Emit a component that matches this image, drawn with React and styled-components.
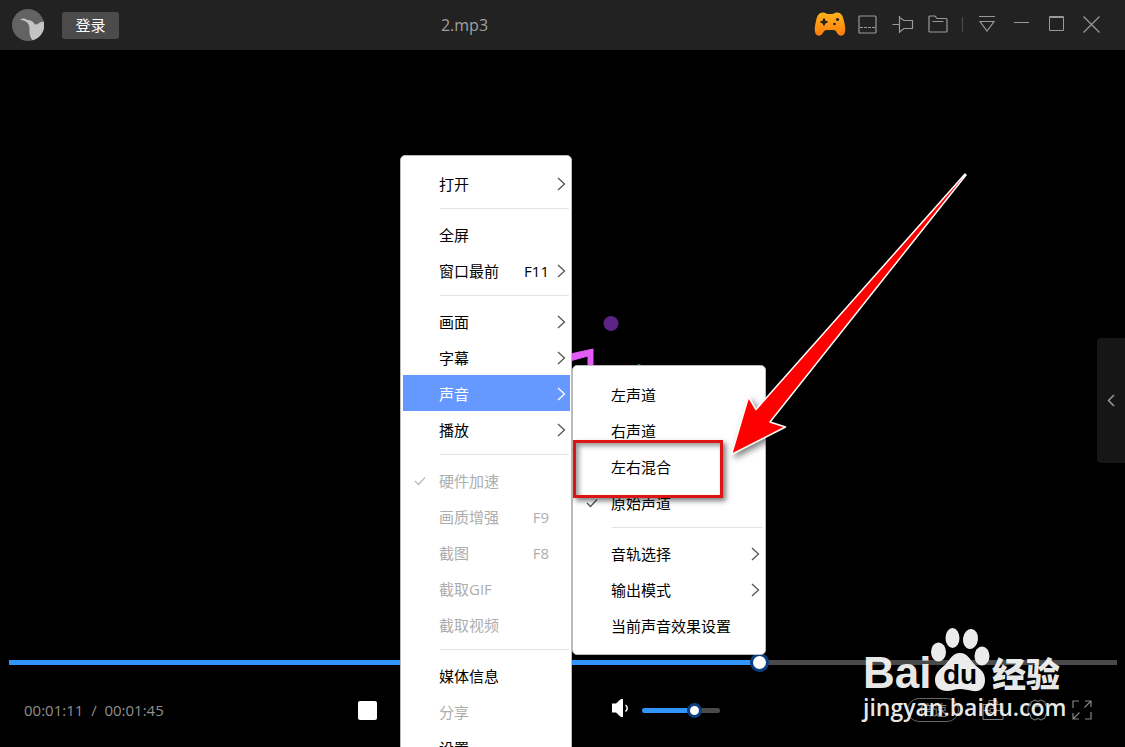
import React, { useState } from "react";
import styled, { createGlobalStyle, css } from "styled-components";

const GlobalStyle = createGlobalStyle`
  * { box-sizing: border-box; }
  body {
    margin: 0;
    background: #000;
    font-family: "Open Sans", "Noto Sans CJK SC", sans-serif;
    font-size: 15px;
  }
  button { font: inherit; border: 0; padding: 0; background: none; color: inherit; }
`;

const Player = styled.div`
  position: relative;
  display: flex;
  flex-direction: column;
  min-height: 100vh;
  overflow: hidden;
  background: #000;
`;

const Header = styled.header`
  display: flex;
  align-items: center;
  height: 50px;
  padding: 0 16px 0 12px;
  background: #222;
`;

const Avatar = styled.svg`
  width: 32px;
  height: 32px;
  margin-right: 18px;
`;

const LoginButton = styled.button`
  width: 57px;
  height: 27px;
  border-radius: 3px;
  background: #4b4b4b;
  color: #fff;
  line-height: 27px;
`;

const Title = styled.h1`
  flex: 1;
  margin: 0;
  text-align: center;
  font-size: 16px;
  font-weight: 400;
  color: #a0a0a0;
`;

const HeaderTools = styled.div`
  display: flex;
  align-items: center;
  align-self: flex-start;
`;

const ToolButton = styled.button`
  display: flex;
  align-items: center;
  justify-content: center;
  width: ${(p) => (p.$wide ? 40 : 35)}px;
  height: 48px;
  color: #999;
`;

const Divider = styled.span`
  width: 1px;
  height: 15px;
  margin: 0 6px 0 7px;
  background: #4d4d4d;
`;

const LineIcon = styled.svg`
  display: block;
  fill: none;
  stroke: currentColor;
  stroke-width: ${(p) => p.$weight || 1};
`;

const Stage = styled.main`
  position: relative;
  flex: 1;
  display: flex;
  align-items: center;
  justify-content: center;
`;

const SideHandle = styled.button`
  position: absolute;
  right: 0;
  top: 288px;
  display: flex;
  align-items: center;
  justify-content: center;
  width: 28px;
  height: 125px;
  border-radius: 4px 0 0 4px;
  background: #161616;
  color: #999;
`;

const Footer = styled.footer`
  height: 95px;
  padding-top: 1px;
`;

const thumb = css`
  -webkit-appearance: none;
  width: ${(p) => p.$thumb}px;
  height: ${(p) => p.$thumb}px;
  margin-top: ${(p) => (5 - p.$thumb) / 2}px;
  border: 3px solid #0b3f80;
  border-radius: 50%;
  background: #fff;
`;

const Slider = styled.input`
  -webkit-appearance: none;
  display: block;
  width: 100%;
  height: 19px;
  margin: 0;
  background: transparent;
  &::-webkit-slider-runnable-track {
    height: 5px;
    border-radius: ${(p) => p.$radius || 0}px;
    background: linear-gradient(to right, #3195fb var(--fill), #4a4a4a var(--fill));
  }
  &::-webkit-slider-thumb { ${thumb} }
`;

const ProgressWrap = styled.div`
  padding: 0 8px 0 9px;
`;

const Controls = styled.div`
  display: grid;
  grid-template-columns: 9fr 362px 10fr;
  align-items: center;
  height: 76px;
  padding: 0 33px 0 24px;
`;

const Time = styled.div`
  color: #8f8f8f;
  white-space: pre;
`;

const Transport = styled.div`
  display: flex;
  align-items: center;
  justify-content: space-between;
`;

const StopButton = styled.button`
  width: 19px;
  height: 19px;
  border-radius: 2px;
  background: #fff;
`;

const Volume = styled.div`
  display: grid;
  grid-template-columns: 31px 78px;
  align-items: center;
  justify-items: start;
`;

const RightTools = styled.div`
  display: flex;
  align-items: center;
  justify-content: flex-end;
  gap: 23px;
  color: #858585;
`;

const PlainButton = styled.button`
  display: block;
`;

const SpeedButton = styled.button`
  width: 52px;
  height: 24px;
  border: 1px solid #666;
  border-radius: 12px;
  font-size: 14px;
  line-height: 20px;
`;

const Menu = styled.div`
  position: absolute;
  left: ${(p) => p.$left}px;
  top: ${(p) => p.$top}px;
  width: ${(p) => p.$width}px;
  padding: ${(p) => p.$pad}px 1px 11px 2px;
  border: 1px solid #bbb;
  border-radius: 5px;
  background: #fff;
`;

const Item = styled.button`
  display: grid;
  grid-template-columns: 36px 1fr auto 21px;
  align-items: center;
  width: 100%;
  height: 36px;
  padding-top: 2px;
  text-align: left;
  white-space: nowrap;
  line-height: 20px;
  color: ${(p) => (p.$active ? "#fff" : "#000")};
  background: ${(p) => (p.$active ? "#6699ff" : "transparent")};
  &:disabled { color: #adadad; }
`;

const ItemIcon = styled.span`
  display: flex;
  justify-content: ${(p) => (p.$end ? "flex-end" : "center")};
  padding-right: ${(p) => (p.$end ? 4 : 2)}px;
  color: ${(p) => p.$color};
`;

const Separator = styled.hr`
  height: 1px;
  margin: 7px 1px 7px 37px;
  border: 0;
  background: #e4e4e4;
`;

const Highlight = styled.div`
  position: absolute;
  left: 573px;
  top: 440px;
  width: 150px;
  height: 58px;
  border: 3px solid #dc1414;
  box-shadow: 3px 3px 5px rgba(0, 0, 0, 0.5), inset 3px 3px 5px rgba(0, 0, 0, 0.4);
  pointer-events: none;
`;

const Arrow = styled.svg`
  position: absolute;
  left: 720px;
  top: 160px;
  pointer-events: none;
  filter: drop-shadow(3px 3px 3px rgba(0, 0, 0, 0.5));
`;

const Watermark = styled.div`
  position: absolute;
  right: 61px;
  bottom: 25px;
  width: 201px;
  color: rgba(255, 255, 255, 0.92);
  pointer-events: none;
`;

const Brand = styled.div`
  display: flex;
  align-items: flex-end;
  height: 66px;
`;

const BrandLatin = styled.span`
  width: 67px;
  font: 700 44px/38px "Liberation Sans", sans-serif;
`;

const BrandCjk = styled.span`
  margin-left: 2px;
  font: 900 34px/38px "Noto Sans CJK SC", sans-serif;
`;

const Site = styled.div`
  font-size: 23px;
  font-weight: 600;
  line-height: 30px;
  white-space: nowrap;
`;

const Chevron = () => (
  <LineIcon width="9" height="14" viewBox="0 0 9 14" $weight={1.3}>
    <path d="M1 1l6.500 6L1 13" />
  </LineIcon>
);

const Check = () => (
  <LineIcon width="12" height="10" viewBox="0 0 12 10" $weight={1.3}>
    <path d="M1 5l3.500 3.500L11 1.500" />
  </LineIcon>
);

const mainItems = [
  { label: "打开", sub: true },
  null,
  { label: "全屏" },
  { label: "窗口最前", key: "F11", sub: true },
  null,
  { label: "画面", sub: true },
  { label: "字幕", sub: true },
  { label: "声音", sub: true, active: true },
  { label: "播放", sub: true },
  null,
  { label: "硬件加速", disabled: true, checked: true },
  { label: "画质增强", key: "F9", disabled: true },
  { label: "截图", key: "F8", disabled: true },
  { label: "截取GIF", disabled: true },
  { label: "截取视频", disabled: true },
  null,
  { label: "媒体信息" },
  { label: "分享", disabled: true },
  { label: "设置" },
];

const soundItems = [
  { label: "左声道" },
  { label: "右声道" },
  { label: "左右混合" },
  { label: "原始声道", checked: true },
  null,
  { label: "音轨选择", sub: true },
  { label: "输出模式", sub: true },
  { label: "当前声音效果设置" },
];

function MenuList({ items, ...place }) {
  return (
    <Menu role="menu" {...place}>
      {items.map((it, i) =>
        it ? (
          <Item key={i} role="menuitem" disabled={it.disabled} $active={it.active}>
            <ItemIcon $color={it.disabled ? "#bbb" : "#555"}>{it.checked && <Check />}</ItemIcon>
            <span>{it.label}</span>
            <span>{it.key}</span>
            <ItemIcon $end $color={it.active ? "#fff" : "#555"}>{it.sub && <Chevron />}</ItemIcon>
          </Item>
        ) : (
          <Separator key={i} />
        )
      )}
    </Menu>
  );
}

function Range({ label, initial, max, ...rest }) {
  const [value, setValue] = useState(initial);
  return (
    <Slider
      type="range"
      aria-label={label}
      min="0"
      max={max}
      step="any"
      value={value}
      onChange={(e) => setValue(Number(e.target.value))}
      style={{ "--fill": `${(value / max) * 100}%` }}
      {...rest}
    />
  );
}

export default function App() {
  return (
    <Player>
      <GlobalStyle />
      <Header>
        <Avatar viewBox="0 0 32 32" aria-hidden="true">
          <circle cx="16" cy="16" r="16" fill="#636363" />
          <path
            d="M8 10.500Q12 8.500 15 11Q18 10.500 20.500 12.500Q22.500 16 25 15.500Q28 12.500 32 12.500A16 16 0 0 1 20.500 31.300Q17 27 17.500 20Q17.500 15 14.500 13Q12 11 8 10.500Z"
            fill="#c4c4c4"
          />
        </Avatar>
        <LoginButton>登录</LoginButton>
        <Title>2.mp3</Title>
        <HeaderTools>
          <ToolButton $wide aria-label="游戏">
            <svg width="32" height="24" viewBox="0 0 32 24">
              <defs>
                <linearGradient id="pad" x1="0" y1="0" x2="0" y2="1">
                  <stop offset="0" stopColor="#ffb31c" />
                  <stop offset="1" stopColor="#ff7d0a" />
                </linearGradient>
              </defs>
              <path
                d="M9 0.500C11.500 0.500 12 2 14 2H18C20 2 20.500 0.500 23 0.500C28 0.500 29 5 30 9C31 13.500 32 18 30.500 21.500C29 24.500 25 24.200 23.500 21.500C22 19 21.500 18 19 18H13C10.500 18 10 19 8.500 21.500C7 24.200 3 24.500 1.500 21.500C0 18 1 13.500 2 9C3 5 4 0.500 9 0.500Z"
                fill="url(#pad)"
              />
              <path
                d="M10 6.500Q10.500 9.500 13.500 10Q10.500 10.500 10 13.500Q9.500 10.500 6.500 10Q9.500 9.500 10 6.500Z"
                fill="#222"
                stroke="#222"
                strokeWidth="1"
              />
              <circle cx="23.500" cy="7.500" r="1.600" fill="#222" />
              <circle cx="20.500" cy="12" r="1.300" fill="#222" />
            </svg>
          </ToolButton>
          <ToolButton aria-label="迷你模式">
            <LineIcon width="19" height="19" viewBox="0 0 19 19" $weight={1.2}>
              <rect x="1" y="1" width="17" height="17" rx="1" />
              <path d="M2 12.500h15" strokeDasharray="3 1" />
            </LineIcon>
          </ToolButton>
          <ToolButton aria-label="置顶">
            <LineIcon width="22" height="19" viewBox="0 0 22 19" $weight={1.2}>
              <path d="M0.500 9.500H7M7.500 1V18M7.500 2.500L12 5.500H20.500V13.500H12L7.500 17" />
            </LineIcon>
          </ToolButton>
          <ToolButton aria-label="打开文件">
            <LineIcon width="20" height="18" viewBox="0 0 20 18" $weight={1.2}>
              <path d="M1 16V2Q1 1 2 1H7L9 3.500H18Q19 3.500 19 4.500V16Q19 17 18 17H2Q1 17 1 16ZM4.500 6.500H15.500" />
            </LineIcon>
          </ToolButton>
          <Divider />
          <ToolButton aria-label="菜单">
            <LineIcon width="18" height="18" viewBox="0 0 18 18" $weight={1.2}>
              <path d="M1 1.500H17M2 6.500H16L9 16Z" />
            </LineIcon>
          </ToolButton>
          <ToolButton aria-label="最小化">
            <LineIcon width="17" height="4" viewBox="0 0 17 4">
              <path d="M1 0.500H16" />
            </LineIcon>
          </ToolButton>
          <ToolButton aria-label="最大化">
            <LineIcon width="17" height="16" viewBox="0 0 17 16">
              <path d="M1.500 0.500H15.500V14.500H1.500ZM1.500 1.500H15.500" />
            </LineIcon>
          </ToolButton>
          <ToolButton aria-label="关闭">
            <LineIcon width="17" height="17" viewBox="0 0 17 17" $weight={1.2}>
              <path d="M0.500 0.500l16 16M16.500 0.500l-16 16" />
            </LineIcon>
          </ToolButton>
        </HeaderTools>
      </Header>

      <Stage>
        <svg width="161" height="120" viewBox="0 0 161 120" aria-hidden="true">
          <circle cx="129" cy="32.500" r="7.500" fill="#5a2384" />
          <path d="M84 64L111 58V90H106V65L84 71Z" fill="#e35cf5" stroke="#e35cf5" strokeLinejoin="round" />
          <circle cx="157" cy="75" r="2" fill="#22869a" />
          <circle cx="125" cy="77" r="3" fill="#1c5c50" />
        </svg>
        <SideHandle aria-label="展开列表">
          <LineIcon width="8" height="13" viewBox="0 0 8 13" $weight={1.5}>
            <path d="M7 1L1.500 6.500L7 12" />
          </LineIcon>
        </SideHandle>
      </Stage>

      <Footer>
        <ProgressWrap>
          <Range label="播放进度" initial={71.4} max={105} $thumb={19} />
        </ProgressWrap>
        <Controls>
          <Time>{"00:01:11  /  00:01:45"}</Time>
          <Transport>
            <StopButton aria-label="停止" />
            <Volume>
              <PlainButton aria-label="静音">
                <svg width="20" height="20" viewBox="0 0 20 20">
                  <path d="M1 5.500H5L10 1H12V19H10L5 14.500H1Z" fill="#fff" />
                  <path d="M14.500 7Q18 10 14.500 13.500" fill="none" stroke="#fff" strokeWidth="1.500" />
                </svg>
              </PlainButton>
              <Range label="音量" initial={70} max={100} $thumb={15} $radius={3} />
            </Volume>
          </Transport>
          <RightTools>
            <SpeedButton>倍速</SpeedButton>
            <PlainButton aria-label="工具箱">
              <LineIcon width="22" height="20" viewBox="0 0 22 20">
                <path d="M1 4.500H21V19.500H1ZM7 4V0.500H15V4M1 10.500H8M14 10.500H21M8 8.500H14V12.500H8Z" />
              </LineIcon>
            </PlainButton>
            <PlainButton aria-label="设置">
              <LineIcon width="22" height="22" viewBox="0 0 22 22">
                <path d="M8 1Q11 4 14 1L18 3Q17.500 7 21 8.500V13.500Q17.500 15 18 19L14 21Q11 18 8 21L4 19Q4.500 15 1 13.500V8.500Q4.500 7 4 3Z" />
                <circle cx="11" cy="11" r="4" />
              </LineIcon>
            </PlainButton>
            <PlainButton aria-label="全屏">
              <LineIcon width="20" height="20" viewBox="0 0 20 20" $weight={1.2}>
                <path d="M1 8V1H7M13 1H19V7M19 1L12.500 7.500M19 12V19H13M7 19H1V13M1 19L7.500 12.500" />
              </LineIcon>
            </PlainButton>
          </RightTools>
        </Controls>
      </Footer>

      <Watermark>
        <Brand>
          <BrandLatin>Bai</BrandLatin>
          <svg width="60" height="66" viewBox="0 0 60 66">
            <g fill="#ebebeb">
              <ellipse cx="8.500" cy="26" rx="7.500" ry="9.500" />
              <ellipse cx="22.500" cy="12" rx="7" ry="10" />
              <ellipse cx="40.500" cy="13" rx="7.500" ry="10" transform="rotate(8 40.500 13)" />
              <ellipse cx="52" cy="30" rx="7.500" ry="9.500" />
              <path d="M30 27C38 27 40 34 45 39C50 43 55 46 55 54C55 62 50 66 43 65C38 64 34 63 30 63C25 63 22 65 17 65C10 65 5 61 5 54C5 47 10 43 15 39C20 34 22 27 30 27Z" />
            </g>
            <text x="30" y="58" textAnchor="middle" fontFamily="Liberation Sans" fontWeight="700" fontSize="28" fill="#000">
              du
            </text>
          </svg>
          <BrandCjk>经验</BrandCjk>
        </Brand>
        <Site>jingyan.baidu.com</Site>
      </Watermark>

      <MenuList items={mainItems} $left={400} $top={155} $width={172} $pad={9} />
      <MenuList items={soundItems} $left={572} $top={365} $width={194} $pad={10} />
      <Highlight />
      <Arrow width="260" height="310" viewBox="0 0 260 310" aria-hidden="true">
        <path
          d="M11.500 294.500L28.500 237L36 249.500L245 14L246 15L50 262L65.500 267Z"
          fill="#f00"
          stroke="#fff"
          strokeWidth="1.500"
          strokeLinejoin="round"
        />
      </Arrow>
    </Player>
  );
}
